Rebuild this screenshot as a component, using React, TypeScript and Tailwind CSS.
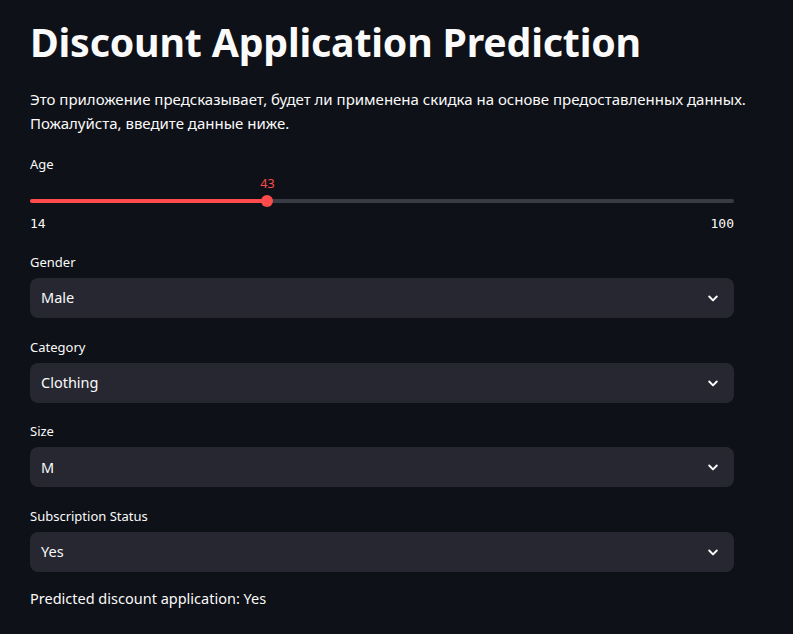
import { useState } from "react";

const selects = [
  { label: "Gender", value: "Male" },
  { label: "Category", value: "Clothing" },
  { label: "Size", value: "M" },
  { label: "Subscription Status", value: "Yes" },
];

function Chevron() {
  return (
    <svg width="14" height="14" viewBox="0 0 24 24" fill="none">
      <path d="M5.5 9.5l6.5 6.5 6.5-6.5" stroke="#fafafa" strokeWidth="3.4" strokeLinecap="round" strokeLinejoin="round" />
    </svg>
  );
}

function SelectBox({ label, value }: { label: string; value: string }) {
  return (
    <div className="mt-[18.7px] first:mt-0">
      <div className="text-[13px] leading-5 text-[#fafafa]">{label}</div>
      <div className="mt-[6px] h-10 rounded-lg bg-[#262730] flex items-center justify-between pl-[11px] pr-[14px]">
        <span className="text-[14.5px] text-[#fafafa]">{value}</span>
        <Chevron />
      </div>
    </div>
  );
}

export default function App() {
  const [age] = useState(43);
  const min = 14;
  const max = 100;
  const pct = ((age - min) / (max - min)) * 100;

  return (
    <div className="min-h-[634px] bg-[#0e1117] text-[#fafafa] font-['Noto_Sans',sans-serif]">
      <div className="w-[704px] ml-[30px] pt-[16px]">
        <h1 className="text-[39.3px] leading-[52px] font-bold tracking-[-0.2px]">
          Discount Application Prediction
        </h1>

        <p className="mt-[19px] text-[15px] leading-6 whitespace-nowrap">
          Это приложение предсказывает, будет ли применена скидка на основе предоставленных данных.
          <br />
          Пожалуйста, введите данные ниже.
        </p>

        <div className="mt-[19px] text-[13px] leading-5">Age</div>

        <div className="relative mt-[1px] h-[41px]">
          <div className="absolute left-0 right-0 top-[24px] h-1 rounded-full bg-[#3a3c45]" />
          <div
            className="absolute left-0 top-[24px] h-1 rounded-full bg-[#ff4b4b]"
            style={{ width: `${pct}%` }}
          />
          <div
            className="absolute top-[20px] w-3 h-3 -ml-[6px] rounded-full bg-[#ff4b4b]"
            style={{ left: `${pct}%` }}
          />
          <div
            className="absolute top-[1px] -translate-x-1/2 text-[12.5px] leading-4 text-[#ff4b4b]"
            style={{ left: `${pct}%` }}
          >
            {age}
          </div>
        </div>
        <div className="flex justify-between font-['DejaVu_Sans_Mono',monospace] text-[13px] leading-4">
          <span>{min}</span>
          <span>{max}</span>
        </div>

        <div className="mt-[20px]">
          {selects.map((s) => (
            <SelectBox key={s.label} label={s.label} value={s.value} />
          ))}
        </div>

        <p className="mt-[14px] text-[14.5px] leading-6">Predicted discount application: Yes</p>
      </div>
    </div>
  );
}
